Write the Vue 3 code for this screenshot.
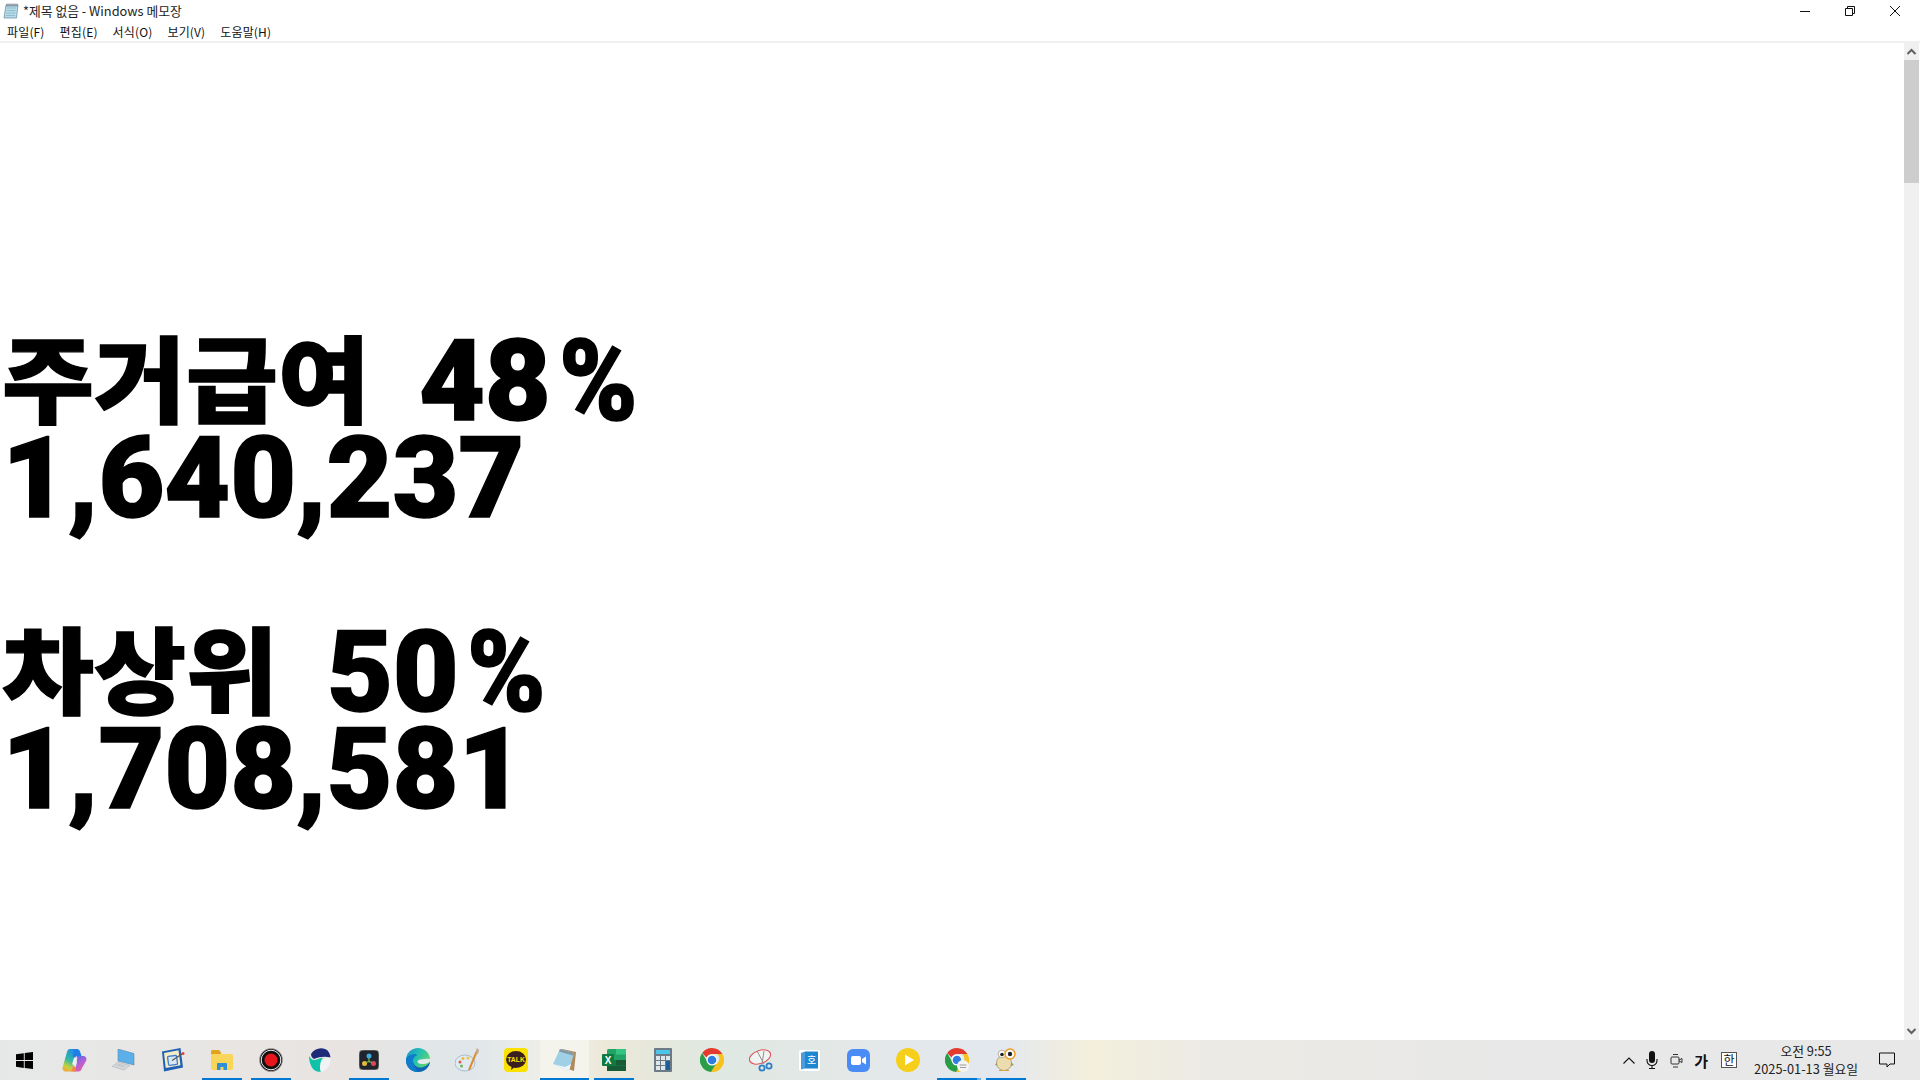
<template>
  <div class="window">
    <header class="title-bar">
      <svg class="note-icon" width="16" height="16" viewBox="0 0 16 16">
        <path d="M3 2h12l-1.500 13H1z" fill="#b5dbe8" stroke="#6f93a3" stroke-width=".8" />
        <path d="M4 5h9M3.700 7.500h9M3.400 10h9M3 12.500h9" stroke="#7fb2c6" stroke-width=".7" />
        <path d="M4 .5v3M6 .5v3M8 .5v3M10 .5v3M12 .5v3M14 .5v3" stroke="#667" stroke-width=".8" />
      </svg>
      <span class="title-text">*제목 없음 - Windows 메모장</span>
      <div class="win-controls">
        <svg width="12" height="12" viewBox="0 0 12 12"><path d="M1 6.500h10" stroke="#111" /></svg>
        <svg width="12" height="12" viewBox="0 0 12 12"><path d="M1.500 3.500h7v7h-7zM3.500 3.500v-2h7v7h-2" fill="none" stroke="#111" /></svg>
        <svg width="12" height="12" viewBox="0 0 12 12"><path d="M1 1l10 10M11 1L1 11" stroke="#111" /></svg>
      </div>
    </header>

    <nav class="menu-bar">
      <span v-for="m in menus" :key="m" class="menu-item">{{ m }}</span>
    </nav>

    <main class="editor">
      <div class="editor-text">
        <div class="line"><span class="ko">주거급여</span><span class="gap"></span>48<span class="pct">%</span></div>
        <div class="line num">1,640,237</div>
        <div class="line"></div>
        <div class="line"><span class="ko">차상위</span><span class="gap"></span>50<span class="pct">%</span></div>
        <div class="line num">1,708,581</div>
      </div>
      <aside class="scrollbar">
        <svg class="arrow" width="15" height="17" viewBox="0 0 15 17"><path d="M3.500 11l4-4 4 4" fill="none" stroke="#606060" stroke-width="2" /></svg>
        <div class="thumb"></div>
        <div class="track"></div>
        <svg class="arrow" width="15" height="17" viewBox="0 0 15 17"><path d="M3.500 6l4 4 4-4" fill="none" stroke="#606060" stroke-width="2" /></svg>
      </aside>
    </main>

    <footer class="taskbar">
      <div class="start">
        <svg width="17" height="17" viewBox="0 0 17 17"><path d="M0 2.300l7.800-1.100v6.900H0zM8.700 1l8.300-1v8.100H8.700zM0 9h7.800v6.900L0 14.800zM8.700 9H17v8l-8.300-1.100z" fill="#000" /></svg>
      </div>
      <div class="apps">
        <!-- copilot -->
        <div class="app">
          <svg width="25" height="24" viewBox="0 0 25 24">
            <defs>
              <linearGradient id="cp1" x1="0.6" y1="0" x2="0.3" y2="1"><stop offset="0" stop-color="#1f8fe8" /><stop offset=".5" stop-color="#35b8a0" /><stop offset=".8" stop-color="#c4d23c" /><stop offset="1" stop-color="#f3a83a" /></linearGradient>
              <linearGradient id="cp2" x1="0.2" y1="0" x2="0.8" y2="1"><stop offset="0" stop-color="#4a6fe6" /><stop offset=".5" stop-color="#b45fd8" /><stop offset="1" stop-color="#f0608e" /></linearGradient>
            </defs>
            <path d="M8 1h6c1.500 0 2 1 1.500 2.500L10 21c-.5 1.700-1.500 2.500-3 2.500H4c-2.500 0-4-2-3.300-4.500L5 4c.5-2 1.500-3 3-3z" fill="url(#cp1)" />
            <path d="M11 1h4c1.500 0 2.500 1 3 2.500l1.500 4.500h-6l-1.500 3-1.500-4 1.500-4.500z" fill="#1f7fe6" />
            <path d="M14.500 8H21c2.500 0 4 2 3.300 4.500L20 20c-.5 2-1.500 3.500-3.500 3.500H10c1.500 0 2.500-1 3-2.500l2-6z" fill="url(#cp2)" />
            <path d="M7 23.500c1.500 0 2.500-1 3-2.500l1-3.500 3 2-.5 4z" fill="#ef8a3e" />
            <path d="M12 9.500h3.500L13 16.500h-3z" fill="#eef0f0" />
          </svg>
        </div>
        <!-- laptop -->
        <div class="app">
          <svg width="23" height="22" viewBox="0 0 23 22">
            <path d="M6 0l16 4.500v11.500L6 12z" fill="#5cb0ea" stroke="#4c7f9f" stroke-width=".5" />
            <path d="M6 13l12 3.500-6 4.500L0 17.500z" fill="#d5d8da" stroke="#a8acae" stroke-width=".5" />
            <path d="M4 16l8 2M5.500 15l8 2" stroke="#b5b8ba" stroke-width=".5" />
          </svg>
        </div>
        <!-- note -->
        <div class="app">
          <svg width="24" height="24" viewBox="0 0 24 24">
            <path d="M1 3.500L19.500 0 22 19.500 3 23.500z" fill="#1f5fb4" />
            <path d="M3 5l14.500-2.800 2 15L4.700 20z" fill="#f4ecc8" />
            <rect x="7" y="8" width="9" height="9" rx="1" fill="#dbe8f4" stroke="#3d7cc9" stroke-width="1.300" transform="rotate(-8 11 12)" />
            <path d="M11 12.500L21 6" stroke="#555" stroke-width="1.300" />
            <circle cx="22" cy="5.500" r="1.500" fill="#d8443a" />
          </svg>
        </div>
        <!-- explorer -->
        <div class="app underline">
          <svg width="22" height="20" viewBox="0 0 22 20">
            <path d="M0 1.500C0 .7.700 0 1.500 0H8l2 2.500v2H0z" fill="#e0a31e" />
            <path d="M0 4h20.500c.8 0 1.500.7 1.500 1.500V18.500c0 .8-.7 1.500-1.500 1.500h-19C.7 20 0 19.300 0 18.500z" fill="#f9d65a" />
            <path d="M6 20v-6c0-.6.400-1 1-1h8c.6 0 1 .4 1 1v6h-3.500v-3h-3v3z" fill="#2f8fd8" />
          </svg>
        </div>
        <!-- recorder -->
        <div class="app underline">
          <svg width="24" height="24" viewBox="0 0 24 24">
            <circle cx="12" cy="12" r="11.500" fill="#111" stroke="#aaa" stroke-width=".8" />
            <circle cx="12" cy="12" r="9.800" fill="none" stroke="#eee" stroke-width="1" />
            <circle cx="12" cy="12" r="6.500" fill="#e8161c" />
          </svg>
        </div>
        <!-- whale -->
        <div class="app">
          <svg width="22" height="24" viewBox="0 0 22 24">
            <path d="M2 6C5 1 11-1 16 1c3 1 5 4 5.500 8.500C16 8 10 9 5 11c-2-1-3-3-3-5z" fill="#1d2a7a" />
            <path d="M0 8c2 2 2 4 3 6 3 0 8-2 18.500-4.500C22 18 17 24 11 23.500 4 23 0 15 0 8z" fill="#f0f3f3" />
            <path d="M0 8c2 2.500 3 4 5 4 3 0 6-2.500 9-2-2 2-3 5-3 9 0 2 0 3.500 1 4.500-1 .3-1.800.3-3 .2C3 23 0 15 0 8z" fill="#10c2a8" />
          </svg>
        </div>
        <!-- davinci -->
        <div class="app underline">
          <svg width="20" height="20" viewBox="0 0 20 20">
            <rect width="20" height="20" rx="4" fill="#20242f" stroke="#9a9c8e" stroke-width=".8" />
            <circle cx="10" cy="6" r="2.500" fill="#3ea8e0" />
            <circle cx="5.500" cy="13.500" r="2.500" fill="#e8b83a" />
            <circle cx="14.500" cy="13.500" r="2.500" fill="#dd4655" />
            <path d="M10 8v3.500M10 11.500l-3 1M10 11.500l3 1" stroke="#7ac943" stroke-width="1.100" />
          </svg>
        </div>
        <!-- edge -->
        <div class="app">
          <svg width="24" height="24" viewBox="0 0 24 24">
            <defs>
              <linearGradient id="edge1" x1="0" y1="0" x2="1" y2="0.6"><stop offset="0" stop-color="#1290d8" /><stop offset=".5" stop-color="#24c0b0" /><stop offset="1" stop-color="#66d860" /></linearGradient>
            </defs>
            <circle cx="12" cy="12" r="12" fill="url(#edge1)" />
            <path d="M24 13c-1 2.500-5 3-8.500 3-2.500 0-4-1-4-2.500 0-1 1.500-2 3-2 3 0 7-1 9.500-.5z" fill="#e2eaec" />
            <path d="M24 14c-.5 5-5.500 10-12 10C5 24 0 18.500 0 12c1-4 6-6.500 11-5-3 1-4.500 3.500-4 6.500.5 3.500 4 6.500 8.500 6 3.500-.5 6-2.500 8.500-5.500z" fill="#0d64b8" />
            <path d="M0 12C1 8 6 5.500 11 7c-3 1-4.500 3.500-4 6.500C7 17 9 20 12 24 5 24 0 18.500 0 12z" fill="#0f7ccc" />
          </svg>
        </div>
        <!-- palette -->
        <div class="app">
          <svg width="24" height="24" viewBox="0 0 24 24">
            <ellipse cx="10" cy="15" rx="10" ry="8" fill="#dfeaf2" stroke="#93aabb" stroke-width=".7" />
            <circle cx="5" cy="14" r="1.500" fill="#e2584f" />
            <circle cx="8" cy="10.500" r="1.500" fill="#f0b53c" />
            <circle cx="13" cy="10" r="1.500" fill="#e8c83c" />
            <circle cx="6.500" cy="18" r="1.500" fill="#6db94a" />
            <path d="M21.500 4L14 22" stroke="#e08c2e" stroke-width="2" />
            <path d="M20 5l2-5 2 2-1 4z" fill="#c8a888" />
          </svg>
        </div>
        <!-- kakao -->
        <div class="app">
          <svg width="24" height="24" viewBox="0 0 24 24">
            <rect width="24" height="24" rx="4" fill="#fae100" />
            <ellipse cx="12" cy="11.500" rx="10" ry="8.500" fill="#3c1e1e" />
            <path d="M8 17l-1 5 5-4z" fill="#3c1e1e" />
            <text x="12" y="14" class="talk">TALK</text>
          </svg>
        </div>
        <!-- notepad -->
        <div class="app current">
          <svg width="24" height="24" viewBox="0 0 24 24">
            <path d="M9 1l14 3-2 19-20-7z" fill="#b08a5a" />
            <path d="M7 1l14 4-5 18L0 16z" fill="#9fd0e6" />
            <path d="M7 1l14 4-1 2.500L6 3.500z" fill="#7f9ba8" />
            <path d="M0 16l16 7 2-7-6 3z" fill="#eef5f8" />
          </svg>
        </div>
        <!-- excel -->
        <div class="app underline">
          <svg width="24" height="24" viewBox="0 0 24 24">
            <rect x="5" y="1" width="19" height="22" rx="1.500" fill="#21a366" />
            <rect x="14" y="1" width="10" height="5.500" fill="#33c481" />
            <rect x="5" y="12" width="9" height="5.500" fill="#107c41" />
            <rect x="14" y="12" width="10" height="5.500" fill="#185c37" />
            <rect x="5" y="17.500" width="19" height="5.500" fill="#185c37" />
            <rect x="0" y="6" width="12" height="12" rx="1" fill="#0e7a3f" />
            <text x="6" y="15.500" class="xl">X</text>
          </svg>
        </div>
        <!-- calculator -->
        <div class="app">
          <svg width="18" height="24" viewBox="0 0 18 24">
            <rect width="18" height="24" rx="1" fill="#6c7a86" />
            <rect x="2" y="2" width="14" height="4" fill="#4cc4ec" />
            <path d="M2 8h4v4H2zM7 8h4v4H7zM12 8h4v4h-4zM2 13h4v4H2zM7 13h4v4H7zM2 18h4v4H2zM7 18h4v4H7z" fill="#dfe6ea" />
            <rect x="12" y="13" width="4" height="9" fill="#1f5d96" />
          </svg>
        </div>
        <!-- chrome -->
        <div class="app">
          <svg width="24" height="24" viewBox="0 0 24 24">
            <path d="M12 0a12 12 0 0 1 10.400 6H12a6 6 0 0 0-5.500 3.600L2.200 5A12 12 0 0 1 12 0z" fill="#e33b2e" />
            <path d="M22.400 6A12 12 0 0 1 11 24l5.200-8a6 6 0 0 0 .9-10z" fill="#f8c21c" />
            <path d="M2.200 5l5 8.500A6 6 0 0 0 16 16l-5 8A12 12 0 0 1 2.200 5z" fill="#2a9d47" />
            <circle cx="12" cy="12" r="5.500" fill="#fff" />
            <circle cx="12" cy="12" r="4.300" fill="#2f7de1" />
          </svg>
        </div>
        <!-- snip -->
        <div class="app">
          <svg width="24" height="24" viewBox="0 0 24 24">
            <ellipse cx="11" cy="9" rx="11" ry="6.500" transform="rotate(-20 11 9)" fill="#fff" fill-opacity=".5" stroke="#e0555c" stroke-width="1.100" />
            <path d="M8 3l7 13M15 3l-2 13" stroke="#8f8f8f" stroke-width="1" />
            <circle cx="13" cy="20" r="2.600" fill="none" stroke="#2e7fc4" stroke-width="1.800" />
            <circle cx="20" cy="18" r="2.600" fill="none" stroke="#2e7fc4" stroke-width="1.800" />
          </svg>
        </div>
        <!-- dictionary -->
        <div class="app">
          <svg width="21" height="21" viewBox="0 0 21 21">
            <rect width="21" height="21" rx="2" fill="#fff" />
            <path d="M2 3l4-1.500v17L2 19.500z" fill="#4a9cdc" />
            <rect x="6" y="1.500" width="13" height="17" fill="#1d87d0" />
            <text x="12.500" y="14" class="dict">호</text>
          </svg>
        </div>
        <!-- zoom -->
        <div class="app">
          <svg width="23" height="23" viewBox="0 0 23 23">
            <rect width="23" height="23" rx="6" fill="#4a8cf5" />
            <rect x="4" y="7" width="10" height="9" rx="2" fill="#fff" />
            <path d="M15 10l4-2.500v8L15 13z" fill="#fff" />
          </svg>
        </div>
        <!-- player -->
        <div class="app">
          <svg width="24" height="24" viewBox="0 0 24 24">
            <circle cx="12" cy="12" r="12" fill="#f5cf1a" />
            <path d="M9 6.500l9 5.500-9 5.500z" fill="#fff" />
          </svg>
        </div>
        <!-- chrome (profile) -->
        <div class="app underline stacked">
          <svg width="24" height="24" viewBox="0 0 24 24">
            <path d="M12 0a12 12 0 0 1 10.400 6H12a6 6 0 0 0-5.500 3.600L2.200 5A12 12 0 0 1 12 0z" fill="#e33b2e" />
            <path d="M22.400 6A12 12 0 0 1 11 24l5.200-8a6 6 0 0 0 .9-10z" fill="#f8c21c" />
            <path d="M2.200 5l5 8.500A6 6 0 0 0 16 16l-5 8A12 12 0 0 1 2.200 5z" fill="#2a9d47" />
            <circle cx="12" cy="12" r="5.500" fill="#fff" />
            <circle cx="12" cy="12" r="4.300" fill="#2f7de1" />
            <circle cx="18" cy="18" r="6" fill="#f4f4f4" />
            <path d="M14.500 17h7M15 19.500h6" stroke="#888" stroke-width=".8" />
          </svg>
        </div>
        <!-- owl -->
        <div class="app underline">
          <svg width="22" height="24" viewBox="0 0 22 24">
            <path d="M2 14l-2 3 3 1zM16 14l3 3-3 1z" fill="#a89a60" />
            <ellipse cx="9" cy="15" rx="7.500" ry="7.500" fill="#ecdcae" stroke="#8e8258" stroke-width=".6" />
            <path d="M4 23h4v-1H4zM10 23h4v-1h-4z" fill="#e0a030" />
            <circle cx="7" cy="6" r="3.800" fill="#fff" stroke="#8e8258" stroke-width=".6" />
            <circle cx="15" cy="6" r="5" fill="#fff" stroke="#ef9a1e" stroke-width="1.500" />
            <circle cx="15" cy="6" r="2.200" fill="#222" />
            <circle cx="7" cy="6.500" r="1.800" fill="#222" />
          </svg>
        </div>
      </div>

      <div class="tray">
        <svg class="chevron" width="12" height="7" viewBox="0 0 12 7"><path d="M.5 6.500L6 1l5.500 5.500" fill="none" stroke="#111" stroke-width="1.100" /></svg>
        <svg class="mic" width="12" height="18" viewBox="0 0 12 18"><rect x="3" y="0" width="6" height="12" rx="3" fill="#111" /><path d="M1 8v1.500a5 5 0 0 0 10 0V8M6 14.500V17M3 17.500h6" fill="none" stroke="#111" stroke-width="1.100" /></svg>
        <svg class="cam" width="13" height="16" viewBox="0 0 13 16"><rect x="1" y="5" width="8" height="7" rx="1" fill="none" stroke="#333" /><path d="M9 8l3-1.500v4L9 9M3 2.500h5M3 15h5" fill="none" stroke="#333" /></svg>
        <span class="ime-ga">가</span>
        <span class="ime-han">한</span>
        <div class="clock">
          <span>오전 9:55</span>
          <span>2025-01-13 월요일</span>
        </div>
        <svg class="notify" width="16" height="16" viewBox="0 0 16 16"><path d="M.5 1h15v11h-4.500l-3 3v-3H.5z" fill="none" stroke="#111" /></svg>
      </div>
    </footer>
  </div>
</template>

<script setup>
const menus = ['파일(F)', '편집(E)', '서식(O)', '보기(V)', '도움말(H)']
</script>

<style>
html,
body {
  margin: 0;
  background: #fff;
  overflow: hidden;
}
</style>

<style scoped>
.window {
  width: 1920px;
  height: 1080px;
  display: flex;
  flex-direction: column;
  font-family: "Noto Sans CJK KR", "Noto Sans", sans-serif;
  color: #111;
  overflow: hidden;
}

.title-bar {
  height: 21px;
  display: flex;
  align-items: center;
  padding-left: 3px;
  font-size: 12.8px;
  flex: none;
}

.note-icon {
  margin-right: 4px;
}

.title-text {
  color: #222;
}

.win-controls {
  margin-left: auto;
  display: flex;
  gap: 33px;
  padding-right: 19px;
  align-items: center;
}

.menu-bar {
  height: 20px;
  flex: none;
  display: flex;
  align-items: center;
  gap: 15px;
  padding-left: 7px;
  font-size: 12px;
  letter-spacing: 0.15px;
  border-bottom: 2px solid #f0f0f0;
}

.editor {
  flex: 1;
  min-height: 0;
  display: flex;
}

.editor-text {
  flex: 1;
  padding-top: 290px;
  overflow: hidden;
  color: #000;
}

.line {
  height: 97px;
  padding-left: 2px;
  font-family: Roboto, "Liberation Sans", sans-serif;
  font-weight: 900;
  font-size: 114px;
  letter-spacing: -0.2px;
  line-height: 97px;
  white-space: nowrap;
  -webkit-text-stroke: 1.5px #000;
}

.ko {
  display: inline-block;
  font-family: "Noto Sans CJK KR", sans-serif;
  font-size: 100px;
  letter-spacing: 0;
  line-height: 0;
  transform: translateY(-1px) scaleY(0.94);
  transform-origin: 50% 0;
}

.gap {
  display: inline-block;
  width: 49px;
}

.pct {
  display: inline-block;
  line-height: 0;
  margin-left: 8px;
  transform: scaleX(0.93);
  transform-origin: 0 50%;
}

.scrollbar {
  width: 15px;
  margin-right: 1px;
  background: #f0f0f0;
  display: flex;
  flex-direction: column;
  flex: none;
}

.arrow {
  flex: none;
}

.thumb {
  height: 123px;
  background: #cdcdcd;
  flex: none;
}

.track {
  flex: 1;
}

.taskbar {
  height: 40px;
  flex: none;
  display: flex;
  background: linear-gradient(90deg, #e6e8e8 0, #e8e6e4 200px, #e9e4e1 330px, #dfe6ea 470px, #f1f0e8 560px, #ebe8d8 610px, #dfe8e2 720px, #e4e8e8 850px, #e3e8ef 1000px, #f3efdc 1090px, #eceae4 1200px, #e8e8e8 1500px);
}

.start {
  width: 48px;
  display: flex;
  align-items: center;
  justify-content: center;
  flex: none;
}

.apps {
  display: flex;
  padding-left: 2px;
}

.app {
  width: 49px;
  height: 40px;
  box-sizing: border-box;
  display: flex;
  align-items: center;
  justify-content: center;
  position: relative;
}

.app.underline::after,
.app.current::after {
  content: "";
  position: absolute;
  left: 5px;
  right: 4px;
  bottom: 0;
  height: 2px;
  background: #0078d4;
}

.app.current {
  background: #f4f3ec;
}

.app.current::after {
  left: 0;
  right: 0;
}

.app.stacked::before {
  content: "";
  position: absolute;
  left: 45px;
  width: 4px;
  bottom: 0;
  height: 2px;
  background: #6aaee6;
}

.talk {
  font: 900 6.8px "Liberation Sans", sans-serif;
  fill: #fae100;
  text-anchor: middle;
}

.xl {
  font: 700 10px "Liberation Sans", sans-serif;
  fill: #fff;
  text-anchor: middle;
}

.dict {
  font: 400 10px "Noto Sans CJK KR", sans-serif;
  fill: #fff;
  text-anchor: middle;
}

.tray {
  margin-left: auto;
  display: flex;
  align-items: center;
  padding-right: 25px;
}

.chevron {
  margin-right: 11px;
}

.mic {
  margin-right: 12px;
}

.cam {
  margin-right: 11px;
}

.ime-ga {
  font-size: 15px;
  font-weight: 700;
  color: #111;
  margin-right: 13px;
}

.ime-han {
  font-size: 12px;
  border: 1px solid #555;
  background: #fff;
  width: 14px;
  height: 14px;
  line-height: 14px;
  text-align: center;
  margin-right: 17px;
}

.clock {
  display: flex;
  flex-direction: column;
  align-items: center;
  font-size: 12.8px;
  line-height: 18px;
  color: #222;
  margin-right: 21px;
}
</style>
